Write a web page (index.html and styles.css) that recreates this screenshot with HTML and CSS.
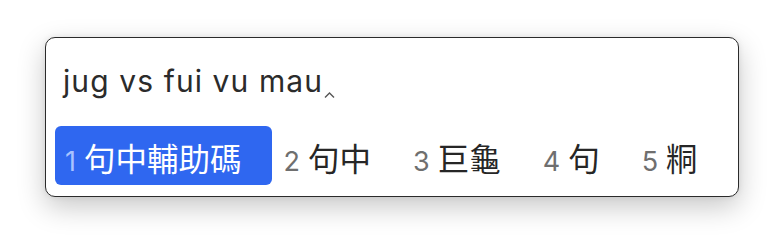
FILE: index.html
```html
<!DOCTYPE html>
<html lang="zh-Hant">
<head>
    <meta charset="UTF-8">
    <meta name="viewport" content="width=device-width, initial-scale=1.0">
    <title>候選窗</title>
    <link rel="stylesheet" href="styles.css">
</head>
<body>
    <div class="panel">
        <div class="preedit">jug vs fui vu mau<svg class="caret" width="11" height="6" viewBox="0 0 11 6"><path d="M1 5.5 L5.5 1 L10 5.5" fill="none" stroke="#555" stroke-width="1.4"/></svg></div>
        <div class="candidates">
            <div class="cand selected"><span class="label">1</span><span class="text">句中輔助碼</span></div>
            <div class="cand"><span class="label">2</span><span class="text">句中</span></div>
            <div class="cand"><span class="label">3</span><span class="text">巨龜</span></div>
            <div class="cand"><span class="label">4</span><span class="text">句</span></div>
            <div class="cand"><span class="label">5</span><span class="text">粡</span></div>
        </div>
    </div>
</body>
</html>
```

FILE: styles.css
```css
* {
    box-sizing: border-box;
}

html, body {
    height: 100%;
}

body {
    margin: 0;
    padding: 37px 0 0 45px;
    background: #ffffff;
    font-family: 'Inter', 'Noto Sans CJK TC', sans-serif;
}

.panel {
    width: 694px;
    height: 160px;
    background: #ffffff;
    border: 1px solid #2b2b2b;
    border-radius: 10px;
    box-shadow: 0 10px 28px rgba(0,0,0,0.22), 0 0 6px rgba(0,0,0,0.08);
    display: flex;
    flex-direction: column;
}

.preedit {
    padding: 23px 0 0 17px;
    font-size: 30px;
    line-height: 40px;
    letter-spacing: 1.1px;
    color: #2b2b2b;
    height: 88px;
}

.caret {
    vertical-align: -6px;
    margin-left: 1px;
}

.candidates {
    display: flex;
    gap: 2px;
    padding: 0 9px;
}

.cand {
    display: flex;
    align-items: baseline;
    gap: 8px;
    height: 59px;
    padding: 8px 30px 0 10px;
    border-radius: 6px;
}

.label {
    font-family: 'Inter', sans-serif;
    font-size: 27px;
    color: #6f6f6f;
}

.text {
    font-family: 'Noto Sans CJK TC', sans-serif;
    font-size: 31.5px;
    color: #262626;
}

.selected {
    background-color: #2f67f0;
}

.selected .label {
    color: #a9c3ff;
}

.selected .text {
    color: #ffffff;
}
```
